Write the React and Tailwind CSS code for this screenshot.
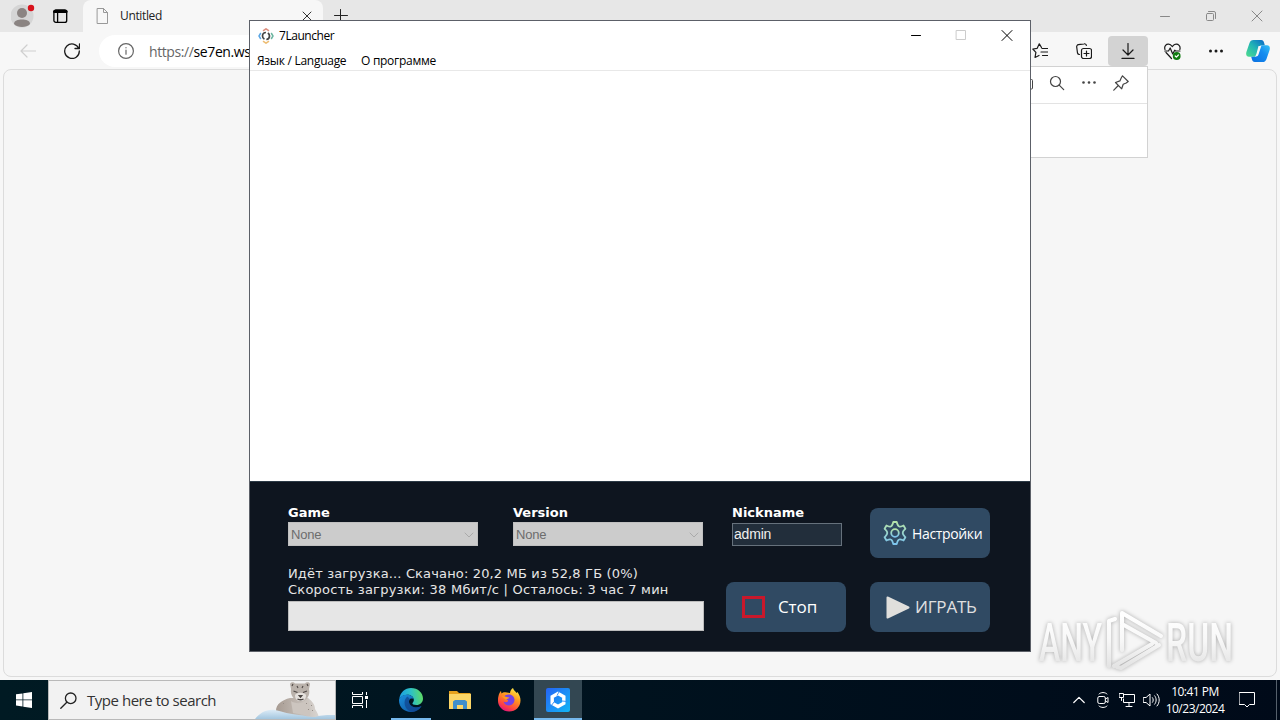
import clsx from 'clsx';

const stroke = { fill: 'none', stroke: 'currentColor', strokeLinecap: 'round', strokeLinejoin: 'round' };

/* ---------- Edge window ---------- */

function TabStrip() {
  return (
    <div className="flex h-8 shrink-0 bg-[#e7e7e7]">
      <div className="flex w-[83px] items-center pl-[11px]">
        <svg className="h-6 w-6" viewBox="0 0 24 24">
          <circle cx="11" cy="12" r="11.500" fill="#d5d5d5" />
          <circle cx="11" cy="9" r="5" fill="#8b8482" />
          <path d="M3 20c0-3.500 4-4.500 8-4.500s8 1 8 4.500c-2 2.300-5 3-8 3s-6-.7-8-3z" fill="#8b8482" />
          <circle cx="20" cy="4" r="3.200" fill="#d8121c" />
        </svg>
        <svg className="ml-[18px] h-4 w-4" viewBox="0 0 16 16" {...stroke} strokeWidth="1.300">
          <rect x=".9" y="2" width="12.800" height="12.400" rx="2" />
          <path d="M1.500 3.500h11.600" strokeWidth="3" />
          <path d="M4.600 5v9" />
        </svg>
      </div>
      <div className="flex w-[240px] items-center rounded-t-lg bg-[#f7f7f7] pl-[12px]">
        <svg className="h-4 w-4 text-[#999]" viewBox="0 0 16 16" {...stroke}>
          <path d="M2.500.5h6l4 4v11h-10zM8.500.5v4h4" />
        </svg>
        <span className="ml-[9px] w-[44px] text-[12px] tracking-[-0.35px] text-[#222]">Untitled</span>
        <svg className="ml-[137px] h-3 w-3 text-[#333]" viewBox="0 0 12 12" {...stroke}>
          <path d="M2 2l8 8M10 2l-8 8" />
        </svg>
      </div>
      <div className="flex flex-1 items-center pl-[11px]">
        <svg className="h-[14px] w-[14px] text-[#222]" viewBox="0 0 14 14" {...stroke}>
          <path d="M.5 6.500h13M6.500.5v13" />
        </svg>
      </div>
      <div className="flex text-[#888]">
        <div className="flex w-[46px] items-center justify-center">
          <svg className="h-3 w-3" viewBox="0 0 12 12" {...stroke}><path d="M1.500 6.500h9" /></svg>
        </div>
        <div className="flex w-[46px] items-center justify-center">
          <svg className="h-3 w-3" viewBox="0 0 12 12" {...stroke}>
            <rect x="1.500" y="3.500" width="7" height="7" rx="1" />
            <path d="M3.500 1.500h5.500a1.500 1.500 0 0 1 1.500 1.500v5.500" />
          </svg>
        </div>
        <div className="flex w-[46px] items-center justify-center">
          <svg className="h-3 w-3" viewBox="0 0 12 12" {...stroke}><path d="M1 1l10 10M11 1L1 11" /></svg>
        </div>
      </div>
    </div>
  );
}

function ToolButton({ active, children }) {
  return (
    <div className="flex w-11 items-center justify-center">
      <div className={clsx('flex h-[30px] w-10 items-center justify-center rounded-[4px]', active && 'bg-[#d3d3d3]')}>
        {children}
      </div>
    </div>
  );
}

function Toolbar() {
  return (
    <div className="flex h-[37px] shrink-0 items-center bg-[#f7f7f7] pt-px text-[#1a1a1a]">
      <svg className="ml-5 h-4 w-4 text-[#cfcfcf]" viewBox="0 0 16 16" {...stroke} strokeWidth="1.200">
        <path d="M15.500 8H1M7 2L1 8l6 6" />
      </svg>
      <svg className="ml-7 h-4 w-4" viewBox="0 0 16 16" {...stroke} strokeWidth="1.300">
        <path d="M14.800 5.500A7.300 7.300 0 1 0 15.300 8M15.500 1v4.500H11" />
      </svg>
      <div className="ml-[19px] flex h-8 flex-1 items-center rounded-full bg-white pl-[19px]">
        <svg className="h-4 w-4 text-[#666]" viewBox="0 0 16 16" {...stroke} strokeWidth="1.200">
          <circle cx="8" cy="8" r="7.400" />
          <path d="M8 7.200v4M8 4.600v.2" />
        </svg>
        <span className="ml-[15px] text-[14px] tracking-[-0.4px] text-[#666]">
          https://<span className="text-black">se7en.ws</span>
        </span>
      </div>
      <div className="flex pr-[2px]">
        <ToolButton>
          <svg className="h-4 w-4" viewBox="0 0 16 16" {...stroke} strokeWidth="1.200">
            <path d="M9.500 4.500L7.300.8 5.200 5.300.8 6l3.100 3.300-.9 5.200 4-2M10 5.500h5.500M9 9h6.500M10.500 12.500h5" />
          </svg>
        </ToolButton>
        <ToolButton>
          <svg className="h-4 w-4" viewBox="0 0 16 16" {...stroke} strokeWidth="1.200">
            <path d="M3.500 11.500A2 2 0 0 1 1.500 10L.7 4a2 2 0 0 1 1.700-2.300L8 .8a2 2 0 0 1 2.400 1.700" />
            <rect x="5.500" y="5.500" width="10" height="10" rx="2" />
            <path d="M10.500 8v5M8 10.500h5" />
          </svg>
        </ToolButton>
        <ToolButton active>
          <svg className="h-4 w-4" viewBox="0 0 16 16" {...stroke} strokeWidth="1.200">
            <path d="M8 .5v11.300M3 7l5 5 5-5M2 15.400h12" />
          </svg>
        </ToolButton>
        <ToolButton>
          <svg className="h-[17px] w-[17px]" viewBox="0 0 17 17" {...stroke} strokeWidth="1.200">
            <path d="M1 6.500C-.2 3 2.500.8 4.800 1.200c1.800.2 2.800 1.500 3.500 2.300.7-.8 1.700-2.100 3.500-2.300C14 .8 17 3 15.800 6.500M2 9.500l5.500 6M.8 8h3.700l1.700-3 2.500 6 2-3.800.8.8h4.500" />
            <circle cx="12.700" cy="13" r="3.900" fill="#107c10" stroke="none" />
            <path d="M11.200 13l1.200 1.200 2-2.200" stroke="#fff" />
          </svg>
        </ToolButton>
        <ToolButton>
          <svg className="h-4 w-4" viewBox="0 0 16 16" fill="currentColor">
            <circle cx="2.500" cy="8" r="1.500" /><circle cx="8" cy="8" r="1.500" /><circle cx="13.500" cy="8" r="1.500" />
          </svg>
        </ToolButton>
        <div className="flex w-10 items-center justify-center">
          <CopilotLogo />
        </div>
      </div>
    </div>
  );
}

function CopilotLogo() {
  return (
    <svg className="h-6 w-6" viewBox="0 0 24 24">
      <defs>
        <linearGradient id="cpA" x1="0" y1="1" x2="1" y2="0">
          <stop offset="0" stopColor="#4fdc8c" /><stop offset=".5" stopColor="#22b5b5" /><stop offset="1" stopColor="#0a66c8" />
        </linearGradient>
        <linearGradient id="cpB" x1="0" y1="1" x2="1" y2="0">
          <stop offset="0" stopColor="#0a6fe0" /><stop offset=".6" stopColor="#168df0" /><stop offset="1" stopColor="#35c3f5" />
        </linearGradient>
      </defs>
      <path d="M7.500 1h7.700c1.700 0 2.400 1.200 2.800 2.500l.8 2.700h-3c-1.800 0-2.500 1.200-3 2.700l-2.200 6.500c-.5 1.500-1.200 2.300-2.800 2.300H3C.7 17.700-.4 15.800.4 13L3.500 4C4.200 2 5.300 1 7.500 1z" fill="url(#cpA)" />
      <path d="M16.500 23H8.800c-1.700 0-2.400-1.200-2.800-2.500l-.8-2.800h3c1.800 0 2.500-1.200 3-2.700l2.200-6.500c.5-1.500 1.200-2.300 2.800-2.300H21c2.300 0 3.400 1.900 2.600 4.700l-3.100 9c-.7 2-1.800 3.100-4 3.100z" fill="url(#cpB)" />
      <path d="M12.500 7h2.800L12.500 15.500c-.4 1.200-1.100 2-2.400 2H8.700c1-.4 1.300-1.300 1.700-2.500z" fill="#f7f7f7" />
    </svg>
  );
}

function DownloadsFlyout() {
  return (
    <div className="absolute top-[66px] left-[788px] flex h-[92px] w-[360px] flex-col border border-[#d2d2d2] bg-white text-[#444]">
      <div className="flex h-[37px] items-center justify-end border-b border-[#e3e3e3] pr-[10px] pb-[4px]">
        <div className="flex w-8 justify-center">
          <svg className="h-4 w-4" viewBox="0 0 16 16" {...stroke}>
            <path d="M1 13V3.500a1 1 0 0 1 1-1h4l2 2h6.500a1 1 0 0 1 1 1V13a1 1 0 0 1-1 1H2a1 1 0 0 1-1-1z" />
          </svg>
        </div>
        <div className="flex w-8 justify-center">
          <svg className="h-4 w-4" viewBox="0 0 16 16" {...stroke} strokeWidth="1.200">
            <circle cx="6.500" cy="6.500" r="5" /><path d="M10.200 10.200l4.500 4.500" />
          </svg>
        </div>
        <div className="flex w-8 justify-center">
          <svg className="h-4 w-4" viewBox="0 0 16 16" fill="currentColor">
            <circle cx="2.500" cy="7.500" r="1.300" /><circle cx="8" cy="7.500" r="1.300" /><circle cx="13.500" cy="7.500" r="1.300" />
          </svg>
        </div>
        <div className="flex w-8 justify-center">
          <svg className="h-4 w-4" viewBox="0 0 16 16" {...stroke} strokeWidth="1.200">
            <path d="M9.500.8l5.700 5.700-2 1.500-3 1.300-1.500 4.500L2.500 7.500l4.400-1.600L8.200 3zM5.300 10.500L.8 15.200" />
          </svg>
        </div>
      </div>
    </div>
  );
}

/* ---------- 7Launcher window ---------- */

function LauncherTitle() {
  return (
    <div className="flex h-[30px] items-center pl-2">
      <svg className="h-4 w-4" viewBox="0 0 16 16" fill="none">
        <circle cx="8" cy="8" r="3.500" stroke="#444" strokeWidth="1.700" strokeDasharray="9 2" strokeDashoffset="4" />
        <path d="M5 2.800L8 .8l3 2" stroke="#dc9080" strokeWidth="1.500" />
        <path d="M5 13.200l3 2 3-2" stroke="#edbd74" strokeWidth="1.500" />
        <path d="M2.800 5L1 8l1.800 3" stroke="#5ba6e4" strokeWidth="1.500" />
        <path d="M13.200 5L15 8l-1.800 3" stroke="#6bb5a0" strokeWidth="1.500" />
      </svg>
      <span className="ml-[5px] text-[12px] tracking-[-0.45px] text-black">7Launcher</span>
      <div className="ml-auto flex text-black">
        <div className="flex w-[45px] justify-center">
          <svg className="h-3 w-3" viewBox="0 0 12 12" {...stroke}><path d="M1.500 5.500h9" /></svg>
        </div>
        <div className="flex w-[46px] justify-center text-[#ccc]">
          <svg className="h-3 w-3" viewBox="0 0 12 12" {...stroke}><rect x="1.500" y=".5" width="9" height="9" /></svg>
        </div>
        <div className="flex w-[46px] justify-center">
          <svg className="h-3 w-3" viewBox="0 0 12 12" {...stroke}><path d="M1 .5l10 10M11 .5l-10 10" /></svg>
        </div>
      </div>
    </div>
  );
}

function Label({ children }) {
  return <div className="h-[17px] font-['DejaVu_Sans'] text-[13px] leading-[16px] font-bold text-white">{children}</div>;
}

function SelectField({ label, value }) {
  return (
    <div className="w-[190px] shrink-0">
      <Label>{label}</Label>
      <div className="flex h-6 items-center justify-between border border-[#c0c0c0] bg-[#ccc] pt-px pr-[3px] pl-[2px] font-['Liberation_Sans'] text-[13px] tracking-[-0.2px] text-[#6d6d6d]">
        {value}
        <svg className="h-[10px] w-[10px] text-[#aaa]" viewBox="0 0 10 10" {...stroke}><path d="M1 3l4 4 4-4" /></svg>
      </div>
    </div>
  );
}

function PanelButton({ className, children }) {
  return (
    <button className={clsx('flex h-[50px] w-[120px] shrink-0 items-center rounded-[8px] bg-[#304a63] whitespace-nowrap', className)}>
      {children}
    </button>
  );
}

function ControlPanel() {
  return (
    <div className="h-[170px] border-t border-[#2c3a46] bg-[#0e151f] pt-[23px] pl-[38px]">
      <div className="flex h-[60px]">
        <SelectField label="Game" value="None" />
        <div className="w-[35px]" />
        <SelectField label="Version" value="None" />
        <div className="ml-[29px] w-[110px]">
          <Label>Nickname</Label>
          <div className="mt-px h-[23px] border border-[#66717c] bg-[#222e3b] pl-px font-['Liberation_Sans'] text-[14px] leading-[21px] tracking-[-0.2px] text-[#eee]">
            admin
          </div>
        </div>
        <PanelButton className="mt-[3px] ml-7 pl-[13px]">
          <svg className="h-6 w-6" viewBox="0 0 24 24" fill="none" strokeWidth="1.800">
            <defs>
              <linearGradient id="gear" x1="0" y1="0" x2="0" y2="1">
                <stop offset="0" stopColor="#b5e3a8" /><stop offset="1" stopColor="#7cc4ee" />
              </linearGradient>
            </defs>
            <g stroke="url(#gear)" strokeLinejoin="round">
              <path d="M10.300 1h3.400c.6 2.500 1 4 2.500 4.500 1.500.6 2.800-.4 4.300-1l1.900 3.300c-1.500 1.500-2.700 2.500-2.700 4.200s1.200 2.700 2.700 4.200l-1.900 3.300c-1.500-.6-2.800-1.600-4.300-1-1.500.5-1.900 2-2.500 4.500h-3.400c-.6-2.500-1-4-2.500-4.500-1.500-.6-2.800.4-4.300 1l-1.900-3.300C3.100 14.700 4.300 13.700 4.300 12S3.100 9.300 1.600 7.800l1.900-3.300c1.500.6 2.800 1.600 4.300 1 1.500-.5 1.900-2 2.500-4.500z" />
              <circle cx="12" cy="12" r="3.800" />
            </g>
          </svg>
          <span className="ml-[5px] text-[14px] tracking-[-0.35px] text-white">Настройки</span>
        </PanelButton>
      </div>
      <div className="flex">
        <div className="w-[416px] pt-px font-['DejaVu_Sans'] text-[13px] leading-[16px] whitespace-nowrap text-[#e6e6e6]">
          <p className="tracking-[0.15px]">Идёт загрузка... Скачано: 20,2 МБ из 52,8 ГБ (0%)</p>
          <p className="tracking-[0.24px]">Скорость загрузки: 38 Мбит/с | Осталось: 3 час 7 мин</p>
          <div className="mt-[3px] h-[30px] border border-[#bcbcbc] bg-[#e6e6e6]" />
        </div>
        <PanelButton className="mt-[17px] ml-[22px] pl-[16px]">
          <span className="h-[22px] w-[23px] border-[3px] border-[#c9182b]" />
          <span className="ml-[13px] text-[17px] tracking-[-0.1px] text-white">Стоп</span>
        </PanelButton>
        <PanelButton className="mt-[17px] ml-6 pl-4">
          <svg className="h-[23px] w-6" viewBox="0 0 24 23">
            <path d="M1.500 1.500l21 10-21 10z" fill="#e0dfdc" stroke="#e0dfdc" strokeWidth="2" strokeLinejoin="round" />
          </svg>
          <span className="ml-[5px] text-[17px] tracking-[-0.2px] text-[#e0e0e0]">ИГРАТЬ</span>
        </PanelButton>
      </div>
    </div>
  );
}

function LauncherWindow() {
  return (
    <div className="absolute top-5 left-[249px] flex h-[632px] w-[782px] flex-col border border-[#5c6068] bg-white">
      <LauncherTitle />
      <div className="flex h-5 items-center gap-[14px] border-b border-[#e8e8e8] pl-[7px] text-[12px] text-black">
        <span className="w-[90px] tracking-[-0.28px] whitespace-nowrap">Язык / Language</span>
        <span className="tracking-[-0.28px]">О программе</span>
      </div>
      <div className="flex-1" />
      <ControlPanel />
    </div>
  );
}

/* ---------- Taskbar ---------- */

function EdgeLogo() {
  return (
    <svg className="h-6 w-6" viewBox="0 0 24 24">
      <defs>
        <linearGradient id="edgeTop" x1="0" y1=".5" x2="1" y2=".4">
          <stop offset="0" stopColor="#1b9de2" /><stop offset=".5" stopColor="#2cc0c8" /><stop offset="1" stopColor="#5fdc62" />
        </linearGradient>
        <linearGradient id="edgeLow" x1="0" y1="0" x2="1" y2="1">
          <stop offset="0" stopColor="#1a8fdc" /><stop offset="1" stopColor="#0d4f9c" />
        </linearGradient>
      </defs>
      <path d="M.3 11C1 4.500 6 0 12 0c7 0 12 5 12 10.500 0 4-3 6.500-6.500 6.500-3 0-4.500-1-4-2 1-1.200 1.500-2 1.300-3.500C14.300 8 11 6.500 8 6.800 4.500 7 1.500 8.500.3 11z" fill="url(#edgeTop)" />
      <path d="M0 12.500C0 9 3.500 6.700 8 6.700c3.500 0 6.500 1.800 6.800 4.800-.5-1.200-3.500-1.700-4.500.5-1.500 3.500 2 7.500 6.500 7.500 2.500 0 4.500-.8 5.700-1.500C20.500 21.500 16.500 24 12 24 5 24 0 19 0 12.500z" fill="url(#edgeLow)" />
      <path d="M8.500 8.500c-4 3-4 9.500.5 13.500 1.500 1.300 3 2 4.500 2 3.500-.2 7-2.500 9-6-5 3-12 1-12.500-4.500-.1-1 .2-1.800.8-2.500" fill="#10468f" opacity=".75" />
    </svg>
  );
}

function FolderLogo() {
  return (
    <svg className="h-5 w-[22px]" viewBox="0 0 22 20">
      <path d="M0 1h8l2 2h11.500v6H0z" fill="#e6a21d" />
      <path d="M0 4h22v15H0z" fill="#fbd667" />
      <path d="M4 19v-7.500l2-1.500h10l2 1.500V19h-4v-4H8v4z" fill="#3f8fcb" />
    </svg>
  );
}

function FirefoxLogo() {
  return (
    <svg className="h-6 w-6" viewBox="0 0 24 24">
      <defs>
        <linearGradient id="fox" x1=".8" y1="0" x2=".3" y2="1">
          <stop offset="0" stopColor="#fff04a" /><stop offset=".4" stopColor="#ff9a1f" /><stop offset=".75" stopColor="#ff4a3d" /><stop offset="1" stopColor="#e3127c" />
        </linearGradient>
      </defs>
      <path d="M1.500 8C2 5.500 3 4 4 3l.5 2.500C5.500 4.500 7 4 8.500 4.200L13 5c.3-2 1-4 3-5 .5 2.500 2.500 3 3.500 5l1-1c2 3 3 5.500 3 8.500C23.500 19 18.500 23.500 12.200 23.500S1 18.500 1 13c0-2 0-3.500.5-5z" fill="url(#fox)" />
      <path d="M8 7.500c3-2 9-1.500 9.500 4 .2 3.500-2.500 6-5.500 6-2.500 0-5-1.500-5.500-4 1 1 3.500 1 4.500-.3.500-.8-.5-1.300-1.500-1.700-1.500-.5-2.300-2-1.500-4z" fill="#7542e5" />
      <path d="M5 8.500c2-.8 4 .5 7.500 1-.5 1.500-3 1-3.500 2.500" fill="#ff9a1f" />
    </svg>
  );
}

function LauncherLogo() {
  return (
    <svg className="h-6 w-6" viewBox="0 0 24 24">
      <defs>
        <linearGradient id="lnch" x1="0" y1="0" x2="1" y2="1">
          <stop offset="0" stopColor="#2563f5" /><stop offset="1" stopColor="#12b7f5" />
        </linearGradient>
      </defs>
      <rect width="24" height="24" rx="2" fill="url(#lnch)" />
      <path d="M12 5.400l5.800 3.300v6.600L12 18.600l-5.800-3.300V8.700z" fill="none" stroke="#fff" strokeWidth="3.400" />
      <path d="M13.500 3l-2.500 4.500M21 13.500l-5-.5M5 18l3-4" stroke="#2b8bf5" strokeWidth=".9" />
    </svg>
  );
}

function SnowLeopard() {
  return (
    <svg className="ml-auto h-[38px] w-[80px]" viewBox="0 0 80 38">
      <defs>
        <linearGradient id="snow" x1="0" y1="0" x2="0" y2="1">
          <stop offset="0" stopColor="#dcebf6" /><stop offset="1" stopColor="#a3c6df" />
        </linearGradient>
        <linearGradient id="fur" x1="0" y1="0" x2="1" y2="0">
          <stop offset="0" stopColor="#a79b92" /><stop offset="1" stopColor="#d9d5d1" />
        </linearGradient>
      </defs>
      <path d="M21 30c0-7 6-11 14-13h18c5 4 7 7 7 11 2 3 4 6 4 10H22z" fill="url(#fur)" />
      <path d="M36 20c4 3 12 3 16-1 3 4 4 10 3 16l-17-3z" fill="#ccc5bf" />
      <path d="M35 3c1-2.500 4-2 5-.5h10c1-1.500 4.500-2 5 .5l-1 5c1.500 6-2 12-8.500 12.500C39 20 35 14 36 8z" fill="#bab2ab" />
      <path d="M40 14c2-3 9-3 11 0 0 4-2 6-5.500 6S40 18 40 14z" fill="#e5e1dd" />
      <path d="M37 5l1-2M53 5l-1-2M38.500 10l4 1.500M52 10l-4 1.500M44 14.500h3l-1.500 1.800zM42.500 18c2 1.200 4 1.200 6 0M42 5l1 2M48 5l-1 2" stroke="#4e4845" strokeWidth="1.100" fill="#4e4845" />
      <path d="M51 22l1 1M56 24l1 1M53 28l1 1M57 29l1 1M28 22l1 1" stroke="#958d87" />
      <path d="M0 38c5-6 11-10 20-9 9 2 14 4 24 5 6 .5 12 2.500 16 2 7-2 12-2 20-2v4z" fill="url(#snow)" />
    </svg>
  );
}

function TaskItem({ running, active, children }) {
  return (
    <div className={clsx('flex h-10 flex-col items-center', active ? 'ml-px w-12 bg-[#334752]' : 'w-[49px]')}>
      <div className="flex flex-1 items-center pt-[2px]">{children}</div>
      {(running || active) && <div className={clsx('h-[2px] bg-[#76b9ed]', active ? 'w-full' : 'w-10')} />}
      {!running && !active && <div className="h-[2px]" />}
    </div>
  );
}

function Taskbar() {
  return (
    <div className="mt-auto flex h-10 shrink-0 bg-linear-to-r from-[#001a23] to-[#000a19] text-white">
      <div className="flex w-12 items-center justify-center">
        <svg className="h-4 w-4" viewBox="0 0 16 16" fill="#fff">
          <path d="M0 2.300l6.500-.9v6.100H0zM7.300 1.300L16 0v7.500H7.300zM0 8.300h6.500v6.200L0 13.600zM7.300 8.300H16V16l-8.700-1.300z" />
        </svg>
      </div>
      <div className="flex w-[288px] items-center border border-[#b9b9b9] bg-[#f2f2f2] text-[#222]">
        <svg className="ml-[11px] h-[17px] w-[17px] shrink-0" viewBox="0 0 17 17" {...stroke} strokeWidth="1.300">
          <circle cx="10.700" cy="6.300" r="5.300" /><path d="M6.800 10.200L.8 16.200" />
        </svg>
        <span className="ml-[10px] text-[15px] tracking-[-0.47px] whitespace-nowrap text-[#333]">Type here to search</span>
        <SnowLeopard />
      </div>
      <div className="flex w-[50px] items-center pl-4">
        <svg className="h-4 w-4" viewBox="0 0 16 16" {...stroke} strokeLinecap="butt">
          <path d="M.5 0v2.500h10V0M.5 16v-2.500h10V16M.5 4.500h10v7H.5zM14.500 0v3M14.500 8v8" />
          <path d="M13 4h3v3h-3z" fill="#fff" stroke="none" />
        </svg>
      </div>
      <TaskItem running><EdgeLogo /></TaskItem>
      <TaskItem><FolderLogo /></TaskItem>
      <TaskItem><FirefoxLogo /></TaskItem>
      <TaskItem active><LauncherLogo /></TaskItem>
      <div className="ml-auto flex items-center">
        <div className="flex w-6 justify-center">
          <svg className="h-3 w-3" viewBox="0 0 12 12" {...stroke} strokeWidth="1.200"><path d="M.8 8.500L6 3.300l5.200 5.200" /></svg>
        </div>
        <div className="flex w-6 justify-center">
          <svg className="h-4 w-3" viewBox="0 0 12 16" {...stroke}>
            <path d="M2 2C4 0 8 0 10 2M2 14c2 2 6 2 8 0" />
            <rect x=".8" y="4.500" width="7.500" height="7" rx="1.500" /><path d="M8.500 7l2.500-1.500v5L8.500 9" />
          </svg>
        </div>
        <div className="flex w-6 justify-center">
          <svg className="h-4 w-[17px]" viewBox="0 0 17 16" {...stroke}>
            <path d="M5.500 2.500h10v8h-11V7M10 10.500v4M7 14.500h6M.5 1.500h4v4h-4zM2.500 5.500v3" />
          </svg>
        </div>
        <div className="flex w-6 justify-center">
          <svg className="h-4 w-[17px]" viewBox="0 0 17 16" {...stroke}>
            <path d="M.6 5.500h2.500L7 2v12l-3.900-3.500H.6zM9.500 5.700c1 1.300 1 3.300 0 4.600M11.700 3.800c2 2.300 2 6.100 0 8.400M14 2c3 3.300 3 8.700 0 12" />
          </svg>
        </div>
        <div className="flex w-16 flex-col items-center text-[12px] leading-[17px] tracking-[-0.5px] whitespace-nowrap">
          <span>10:41 PM</span>
          <span>10/23/2024</span>
        </div>
        <div className="flex w-10 justify-center">
          <svg className="h-4 w-4" viewBox="0 0 16 16" {...stroke} strokeLinejoin="miter">
            <path d="M.5.5h15v12h-5L8 15l-2.500-2.500h-5z" />
          </svg>
        </div>
        <div className="ml-[9px] h-10 w-1 border-l border-[#55606c]" />
      </div>
    </div>
  );
}

function Watermark() {
  return (
    <svg className="absolute top-[604px] left-[1030px] h-[74px] w-[224px] drop-shadow-[0_0_2px_rgba(0,0,0,0.3)]" viewBox="0 0 224 74">
      <defs>
        <linearGradient id="wm" gradientUnits="userSpaceOnUse" x1="0" y1="10" x2="0" y2="62">
          <stop offset="0" stopColor="#fff" /><stop offset=".5" stopColor="#f8f8f8" /><stop offset="1" stopColor="#e4e4e4" />
        </linearGradient>
      </defs>
      <g fill="url(#wm)" fontFamily="Roboto" fontSize="53" fontWeight="500">
        <text x="9" y="57" textLength="63" lengthAdjust="spacingAndGlyphs">ANY</text>
        <text x="136" y="57" textLength="67" lengthAdjust="spacingAndGlyphs">RUN</text>
      </g>
      <g fill="none" stroke="url(#wm)" strokeWidth="4" strokeLinejoin="round" strokeLinecap="round">
        <path d="M92 46V9l39 23M92 20l34 19M79 62V17l6-2M129 41L91 64l-4-1M122 40L84 62" />
      </g>
    </svg>
  );
}

export default function App() {
  return (
    <div className="relative flex h-[720px] w-[1280px] flex-col overflow-hidden bg-[#f7f7f7] font-['Open_Sans','Noto_Sans',sans-serif]">
      <TabStrip />
      <Toolbar />
      <div className="mx-[3px] h-[608px] shrink-0 rounded-[8px] border border-[#dcdcdc] bg-[#f6f6f6]" />
      <Taskbar />
      <DownloadsFlyout />
      <LauncherWindow />
      <Watermark />
    </div>
  );
}
